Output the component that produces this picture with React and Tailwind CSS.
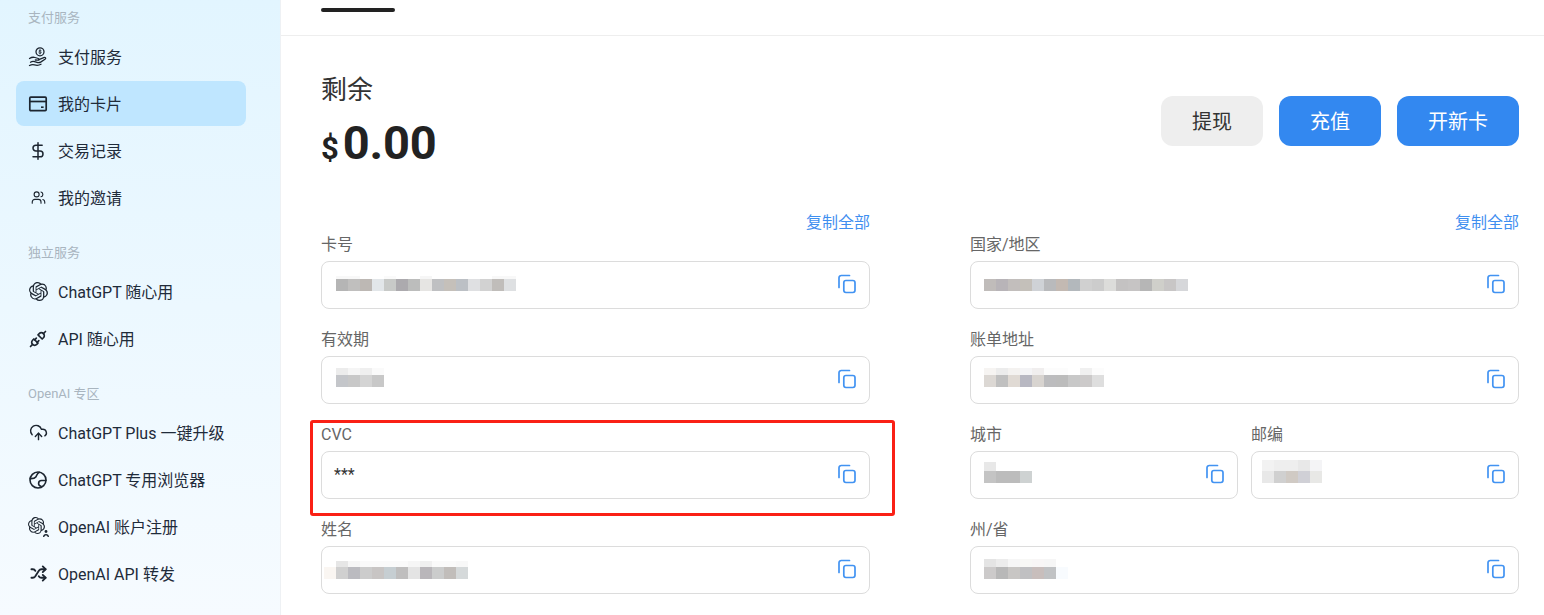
import React from 'react'
import { DollarSign, Users, CloudUpload, Shuffle } from 'lucide-react'
import { SiOpenai } from 'react-icons/si'
import { TbPlugConnected } from 'react-icons/tb'

const HandCoin = () => (
  <svg width="20" height="20" viewBox="0 0 20 20" fill="none" stroke="currentColor" strokeWidth="1.3" strokeLinecap="round" strokeLinejoin="round">
    <circle cx="12" cy="4.8" r="4" />
    <path d="M12 2.6v4.4M13.2 3.6c-.6-.5-2.3-.5-2.3.5s2.400.6 2.400 1.500-1.800 1-2.500.4" strokeWidth="0.8" />
    <path d="M1.500 11.500c2-1.300 3.800-1.500 5.500-1l3.300 1c1.200.4.900 1.800-.4 1.700l-2.600-.2" />
    <path d="M10.800 12.600l5-2c1.700-.6 2.500.8 1.200 1.700l-4 2.600c-1.300.8-2.600 1-4 .5l-2.500-.8c-1.500-.5-2.800-.2-4 .6" />
    <path d="M1.500 18.500c2-1 3.500-1 5-.6 2.500.7 4.500.5 6.500-.6" />
  </svg>
)

const CardIcon = () => (
  <svg width="20" height="20" viewBox="0 0 20 20" fill="none" stroke="currentColor" strokeWidth="1.700">
    <rect x="1.800" y="3.200" width="16.400" height="13.400" rx="1" />
    <path d="M1.800 7.500h16.400" />
    <path d="M13 13.200h2.600" strokeWidth="1.600" />
  </svg>
)

const BrowserIcon = () => (
  <svg width="20" height="20" viewBox="0 0 20 20" fill="none" stroke="currentColor" strokeWidth="1.600" strokeLinecap="round">
    <circle cx="10" cy="10" r="8" />
    <path d="M11.500 2.300c-2.800 1-2.600 3.200-3.700 4.700-1.100 1.500-3.200 1.700-5.600 1.600" />
    <path d="M17.900 10.500h-4.400a2.900 2.900 0 0 0-2.900 2.900c0 1.500 1 2.500 2.300 2.800" />
  </svg>
)

const OpenAiUser = () => (
  <span className="flex w-5 h-5 items-end">
    <SiOpenai size={17} className="shrink-0 self-start" />
    <svg width="6" height="7" viewBox="0 0 6 7" fill="currentColor" className="shrink-0 -ml-0.5">
      <circle cx="3" cy="1.500" r="1.400" />
      <path d="M0 7c0-2 1.200-3 3-3s3 1 3 3H4.600c0-.8-.6-1.400-1.600-1.400S1.400 6.200 1.400 7z" />
    </svg>
  </span>
)

const CopyIcon = () => (
  <svg width="20" height="20" viewBox="0 0 20 20" fill="none" stroke="#4293f2" strokeWidth="1.700" strokeLinecap="round" className="shrink-0 self-center mb-0.5">
    <path d="M2 13.500V3.800A2.300 2.300 0 0 1 4.300 1.500h8.200" />
    <rect x="6.800" y="6.500" width="11.200" height="12" rx="2.200" />
  </svg>
)

const menu = [
  { title: '支付服务', items: [
    { icon: <HandCoin />, label: '支付服务' },
    { icon: <CardIcon />, label: '我的卡片', active: true },
    { icon: <DollarSign size={20} strokeWidth={1.8} />, label: '交易记录' },
    { icon: <Users size={15} strokeWidth={1.8} />, label: '我的邀请' },
  ] },
  { title: '独立服务', items: [
    { icon: <SiOpenai size={19} />, label: 'ChatGPT 随心用' },
    { icon: <TbPlugConnected size={20} />, label: 'API 随心用' },
  ] },
  { title: 'OpenAI 专区', items: [
    { icon: <CloudUpload size={19} strokeWidth={1.8} />, label: 'ChatGPT Plus 一键升级' },
    { icon: <BrowserIcon />, label: 'ChatGPT 专用浏览器' },
    { icon: <OpenAiUser />, label: 'OpenAI 账户注册' },
    { icon: <Shuffle size={17} strokeWidth={2.6} />, label: 'OpenAI API 转发' },
  ] },
]

// pixelated values, the reference has them blurred out
const Mosaic = ({ pad, top, topH, bottom }) => (
  <div className={`flex flex-col ${pad}`}>
    <div className={`flex ${topH}`}>
      {top.map((c, i) => <div key={i} className={`w-3 ${c}`} />)}
    </div>
    <div className="flex h-3">
      {bottom.map((c, i) => <div key={i} className={`w-3 ${c}`} />)}
    </div>
  </div>
)

const Field = ({ label, mosaic, value, className = '' }) => (
  <div className={className}>
    <div className="h-6 text-base leading-6 text-[#666666]">{label}</div>
    <div className="mt-1 h-12 flex justify-between border-[1.5px] border-[#dcdcdc] rounded-lg pr-[12px] bg-white">
      {mosaic ? <Mosaic {...mosaic} /> : <span className="self-center pl-3 text-base text-[#333333]">{value}</span>}
      <CopyIcon />
    </div>
  </div>
)

const CopyAll = () => (
  <div className="h-[23px] pt-px text-right text-base leading-6 text-[#3f8ff0]">复制全部</div>
)

export default function App() {
  return (
    <div className="relative flex h-[615px] overflow-hidden bg-white text-[#222222] font-['Roboto','Noto_Sans_CJK_SC',sans-serif]">
      <aside className="w-[281px] shrink-0 pt-2 px-4 border-r border-[#eef1f4] bg-gradient-to-b from-[#e2f5ff] to-[#f6fbff]">
        {menu.map((group, i) => (
          <div key={group.title} className={i > 0 ? 'mt-[23px]' : ''}>
            <div className="h-5 mb-1.5 pl-3 text-[13px] leading-5 text-[#a9b5bf]">{group.title}</div>
            <div className="flex flex-col gap-0.5">
              {group.items.map(item => (
                <div key={item.label} className={`h-[45px] w-[230px] flex items-center gap-2.5 px-3 rounded-lg text-base text-[#1f2b3a] ${item.active ? 'bg-[#bfe6ff]' : ''}`}>
                  <span className="w-5 h-5 flex items-center justify-center shrink-0 text-[#1c2530]">{item.icon}</span>
                  <span className="pt-0.5">{item.label}</span>
                </div>
              ))}
            </div>
          </div>
        ))}
      </aside>

      <main className="flex-1 min-w-0">
        <div className="h-9 pl-10 pt-2 border-b border-[#eeeeee]">
          <div className="w-[74px] h-[3.5px] rounded-full bg-[#222222]" />
        </div>
        <div className="pl-10 pr-[25px] pt-9">
          <div className="flex justify-between items-start">
            <div>
              <div className="pt-px h-[34px] text-[26px] leading-[34px] text-[#333333]">剩余</div>
              <div className="mt-[9px] h-14 flex items-baseline gap-[4px] font-bold leading-[56px]">
                <span className="text-[31px]">$</span>
                <span className="text-[47px] tracking-[-0.2px]">0.00</span>
              </div>
            </div>
            <div className="flex gap-4 pt-6">
              <button className="h-[50px] w-[102px] pt-0.5 rounded-xl bg-[#eeeeee] text-[20px] text-[#333333]">提现</button>
              <button className="h-[50px] w-[102px] pt-0.5 rounded-xl bg-[#3388f0] text-[20px] text-white">充值</button>
              <button className="h-[50px] w-[122px] pt-0.5 rounded-xl bg-[#3388f0] text-[20px] text-white">开新卡</button>
            </div>
          </div>

          <div className="mt-[39px] grid grid-cols-2 gap-x-[100px]">
            <div className="flex flex-col gap-[19px]">
              <div>
                <CopyAll />
                <Field label="卡号" mosaic={{
                  pad: 'pl-[14px] pt-[14px]',
                  topH: 'h-[3px]',
                  top: ['bg-[#f8f8f8]', 'bg-[#f8f8f8]', 'bg-white', 'bg-white', 'bg-[#fafafa]', 'bg-white', 'bg-white', 'bg-[#f6f6f6]', 'bg-white', 'bg-white', 'bg-white', 'bg-white', 'bg-white', 'bg-[#f8f8f8]', 'bg-[#f8f8f8]'],
                  bottom: ['bg-[#b5b5b5]', 'bg-[#c0bfbe]', 'bg-[#bdb8b4]', 'bg-[#e2e6e9]', 'bg-[#c8cac8]', 'bg-[#acaaae]', 'bg-[#bcbdbc]', 'bg-[#e6e5e3]', 'bg-[#bfc0c2]', 'bg-[#c5c0ba]', 'bg-[#bcc0c5]', 'bg-[#dfe0e2]', 'bg-[#d2d2d2]', 'bg-[#c0bdba]', 'bg-[#dee0e2]'],
                }} />
              </div>
              <Field label="有效期" mosaic={{
                pad: 'pl-[14px] pt-[11px]',
                topH: 'h-[7px]',
                top: ['bg-[#ececec]', 'bg-[#f5f5f5]', 'bg-[#efefef]', 'bg-[#fafafa]'],
                bottom: ['bg-[#c4c6ca]', 'bg-[#c8c8c8]', 'bg-[#d4d4d4]', 'bg-[#c8c8c8]'],
              }} />
              <Field label="CVC" value="***" />
              <Field label="姓名" mosaic={{
                pad: 'pl-[2px] pt-[14px]',
                topH: 'h-[6px]',
                top: ['bg-white', 'bg-[#e6e6e6]', 'bg-[#f6f6f6]', 'bg-[#fafafa]', 'bg-[#fafafa]', 'bg-[#fafafa]', 'bg-[#fafafa]', 'bg-[#f6f6f6]', 'bg-[#f0f0f0]', 'bg-[#fafafa]', 'bg-[#fafafa]', 'bg-[#f8f8f8]'],
                bottom: ['bg-[#faf6f2]', 'bg-[#d0d0d0]', 'bg-[#bbbbc0]', 'bg-[#cccccc]', 'bg-[#c8c5c4]', 'bg-[#c6ced2]', 'bg-[#bfbebe]', 'bg-[#e4e4e4]', 'bg-[#b9b6ba]', 'bg-[#cbcccc]', 'bg-[#c1bdba]', 'bg-[#d5d9da]'],
              }} />
            </div>

            <div className="flex flex-col gap-[19px]">
              <div>
                <CopyAll />
                <Field label="国家/地区" mosaic={{
                  pad: 'pl-[13px] pt-[17px]',
                  topH: 'h-0',
                  top: [],
                  bottom: ['bg-[#c0bcba]', 'bg-[#b8b4b8]', 'bg-[#c2bebc]', 'bg-[#c4c0ba]', 'bg-[#cfd2d6]', 'bg-[#b9babc]', 'bg-[#c3b9b2]', 'bg-[#b3b8bc]', 'bg-[#d0d0d0]', 'bg-[#cccccc]', 'bg-[#dcdcda]', 'bg-[#c4c2c2]', 'bg-[#c6c4c4]', 'bg-[#b6b6b6]', 'bg-[#cfcfca]', 'bg-[#c8c6c6]', 'bg-[#d6d7da]'],
                }} />
              </div>
              <Field label="账单地址" mosaic={{
                pad: 'pl-[13px] pt-[11px]',
                topH: 'h-[7px]',
                top: ['bg-[#f6f4f2]', 'bg-[#ececec]', 'bg-[#f4f2f0]', 'bg-[#f4f4f6]', 'bg-[#f0eeee]', 'bg-[#fcfcfc]', 'bg-[#fcfcfc]', 'bg-white', 'bg-[#f0f0f0]', 'bg-[#fcfcfc]'],
                bottom: ['bg-[#dcd8d4]', 'bg-[#c0c0c0]', 'bg-[#e0dad4]', 'bg-[#b8b8c2]', 'bg-[#d8d4d0]', 'bg-[#bcbcbe]', 'bg-[#bcbcbc]', 'bg-[#c8c8c8]', 'bg-[#cccaca]', 'bg-[#dedede]'],
              }} />
              <div className="grid grid-cols-2 gap-x-[13px]">
                <Field label="城市" mosaic={{
                  pad: 'pl-[13px] pt-[10px]',
                  topH: 'h-[9px]',
                  top: ['bg-[#e8e8e8]', 'bg-white', 'bg-white', 'bg-white'],
                  bottom: ['bg-[#c4c4c4]', 'bg-[#bcbcbc]', 'bg-[#bcbcbc]', 'bg-[#ced2d2]'],
                }} />
                <Field label="邮编" mosaic={{
                  pad: 'pl-[10px] pt-[8px]',
                  topH: 'h-[11px]',
                  top: ['bg-[#f2f2f2]', 'bg-[#eeeeee]', 'bg-[#eeeeee]', 'bg-[#e8e8e8]', 'bg-[#f4f4f6]'],
                  bottom: ['bg-[#e8e8e8]', 'bg-[#d0d0d0]', 'bg-[#d0cac4]', 'bg-[#d0d0d6]', 'bg-[#e8e8e6]'],
                }} />
              </div>
              <Field label="州/省" mosaic={{
                pad: 'pl-[13px] pt-[12px]',
                topH: 'h-[8px]',
                top: ['bg-[#e4e4e4]', 'bg-[#ececec]', 'bg-[#f6f6f6]', 'bg-[#f8f8f6]', 'bg-[#f8f6f6]', 'bg-[#f6f6f6]', 'bg-white'],
                bottom: ['bg-[#cccaca]', 'bg-[#b8b8b8]', 'bg-[#c8c6c4]', 'bg-[#c0c0c2]', 'bg-[#c8bebc]', 'bg-[#c0c2c4]', 'bg-[#f8fbfe]'],
              }} />
            </div>
          </div>
        </div>
      </main>

      {/* annotation drawn over the page */}
      <div className="absolute left-[310px] top-[420px] w-[585px] h-[96px] border-[3px] border-[#fa2015] rounded-[3px] pointer-events-none" />
    </div>
  )
}
